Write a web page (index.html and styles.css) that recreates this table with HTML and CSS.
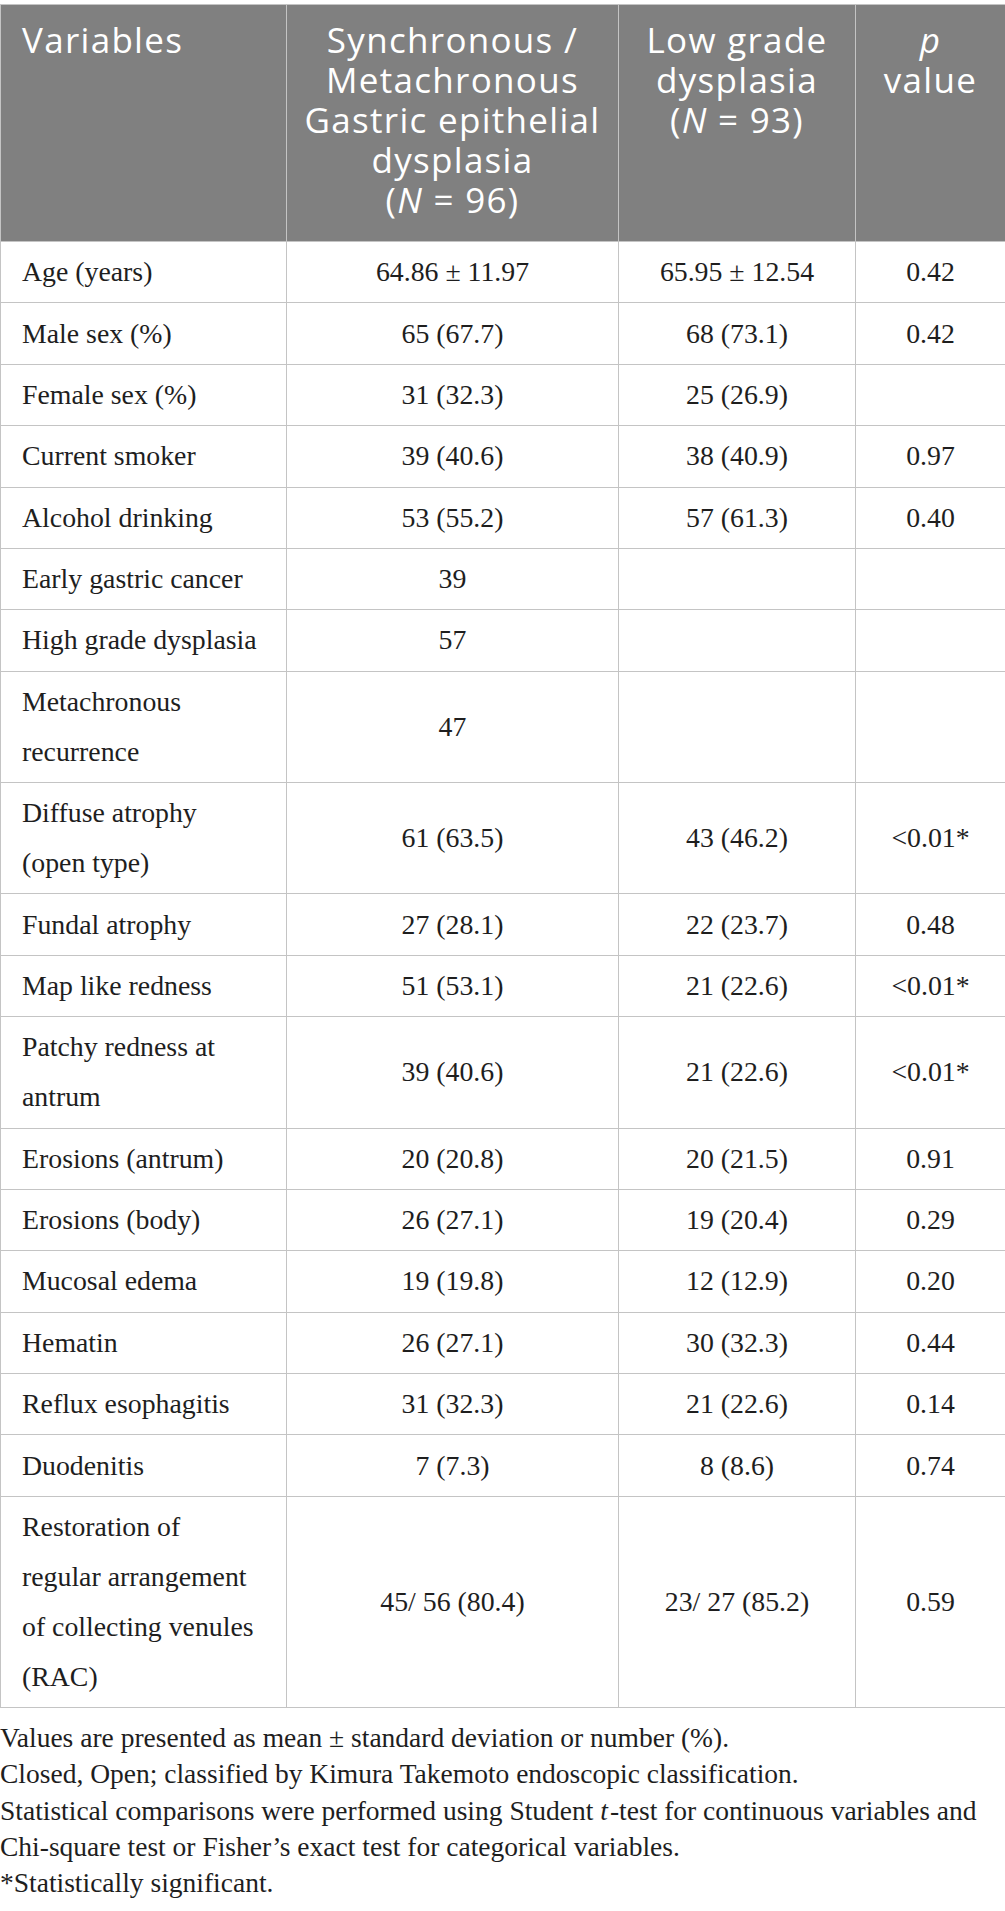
FILE: index.html
```html
<!DOCTYPE html>
<html lang="en">
<head>
<meta charset="utf-8">
<title>Table</title>
<link rel="stylesheet" href="styles.css">
</head>
<body>
<div class="page">
  <table class="data">
    <colgroup>
      <col class="c1"><col class="c2"><col class="c3"><col class="c4">
    </colgroup>
    <thead>
      <tr>
        <th class="left">Variables</th>
        <th>Synchronous /<br>Metachronous<br>Gastric epithelial<br>dysplasia<br>(<i>N</i> = 96)</th>
        <th>Low grade<br>dysplasia<br>(<i>N</i> = 93)</th>
        <th><i>p</i><br>value</th>
      </tr>
    </thead>
    <tbody>
      <tr><td class="left">Age (years)</td><td>64.86 ± 11.97</td><td>65.95 ± 12.54</td><td>0.42</td></tr>
      <tr><td class="left">Male sex (%)</td><td>65 (67.7)</td><td>68 (73.1)</td><td>0.42</td></tr>
      <tr><td class="left">Female sex (%)</td><td>31 (32.3)</td><td>25 (26.9)</td><td></td></tr>
      <tr><td class="left">Current smoker</td><td>39 (40.6)</td><td>38 (40.9)</td><td>0.97</td></tr>
      <tr><td class="left">Alcohol drinking</td><td>53 (55.2)</td><td>57 (61.3)</td><td>0.40</td></tr>
      <tr><td class="left">Early gastric cancer</td><td>39</td><td></td><td></td></tr>
      <tr><td class="left">High grade dysplasia</td><td>57</td><td></td><td></td></tr>
      <tr><td class="left">Metachronous<br>recurrence</td><td>47</td><td></td><td></td></tr>
      <tr><td class="left">Diffuse atrophy<br>(open type)</td><td>61 (63.5)</td><td>43 (46.2)</td><td>&lt;0.01*</td></tr>
      <tr><td class="left">Fundal atrophy</td><td>27 (28.1)</td><td>22 (23.7)</td><td>0.48</td></tr>
      <tr><td class="left">Map like redness</td><td>51 (53.1)</td><td>21 (22.6)</td><td>&lt;0.01*</td></tr>
      <tr><td class="left">Patchy redness at<br>antrum</td><td>39 (40.6)</td><td>21 (22.6)</td><td>&lt;0.01*</td></tr>
      <tr><td class="left">Erosions (antrum)</td><td>20 (20.8)</td><td>20 (21.5)</td><td>0.91</td></tr>
      <tr><td class="left">Erosions (body)</td><td>26 (27.1)</td><td>19 (20.4)</td><td>0.29</td></tr>
      <tr><td class="left">Mucosal edema</td><td>19 (19.8)</td><td>12 (12.9)</td><td>0.20</td></tr>
      <tr><td class="left">Hematin</td><td>26 (27.1)</td><td>30 (32.3)</td><td>0.44</td></tr>
      <tr><td class="left">Reflux esophagitis</td><td>31 (32.3)</td><td>21 (22.6)</td><td>0.14</td></tr>
      <tr><td class="left">Duodenitis</td><td>7 (7.3)</td><td>8 (8.6)</td><td>0.74</td></tr>
      <tr><td class="left">Restoration of<br>regular arrangement<br>of collecting venules<br>(RAC)</td><td>45/ 56 (80.4)</td><td>23/ 27 (85.2)</td><td>0.59</td></tr>
    </tbody>
  </table>
  <div class="notes">
    <p>Values are presented as mean ± standard deviation or number (%).</p>
    <p>Closed, Open; classified by Kimura Takemoto endoscopic classification.</p>
    <p>Statistical comparisons were performed using Student <i class="it">t</i>-test for continuous variables and Chi-square test or Fisher’s exact test for categorical variables.</p>
    <p>*Statistically significant.</p>
  </div>
</div>
</body>
</html>
```

FILE: styles.css
```css
html, body {
  margin: 0;
  padding: 0;
  background: #ffffff;
}

.page {
  padding-top: 4px;
  width: 1005px;
}

.data {
  width: 1005px;
  border-collapse: collapse;
  table-layout: fixed;
  font-family: "Liberation Serif", "Times New Roman", serif;
  font-size: 27.8px;
  color: #1e1e1e;
}

.c1 { width: 286px; }
.c2 { width: 332px; }
.c3 { width: 237px; }
.c4 { width: 150px; }

.data th {
  background: #808080;
  color: #ffffff;
  font-family: "Open Sans", "Noto Sans", sans-serif;
  font-weight: 400;
  font-size: 35px;
  letter-spacing: 1.3px;
  line-height: 40px;
  text-align: center;
  vertical-align: top;
  padding: 15px 4px 21px 4px;
  border: 1px solid #c4c4c4;
}

.data th.left {
  text-align: left;
  padding-left: 21px;
}

.data td {
  line-height: 50px;
  padding: 5.2px 6px;
  text-align: center;
  vertical-align: middle;
  border: 1px solid #c4c4c4;
}

.data td.left {
  text-align: left;
  padding-left: 21px;
}

.notes {
  margin-top: 12px;
  font-family: "Liberation Serif", "Times New Roman", serif;
  font-size: 27.5px;
  line-height: 36.3px;
  color: #1e1e1e;
}

.notes p {
  margin: 0;
}

.notes .it {
  padding-right: 2px;
}
```
